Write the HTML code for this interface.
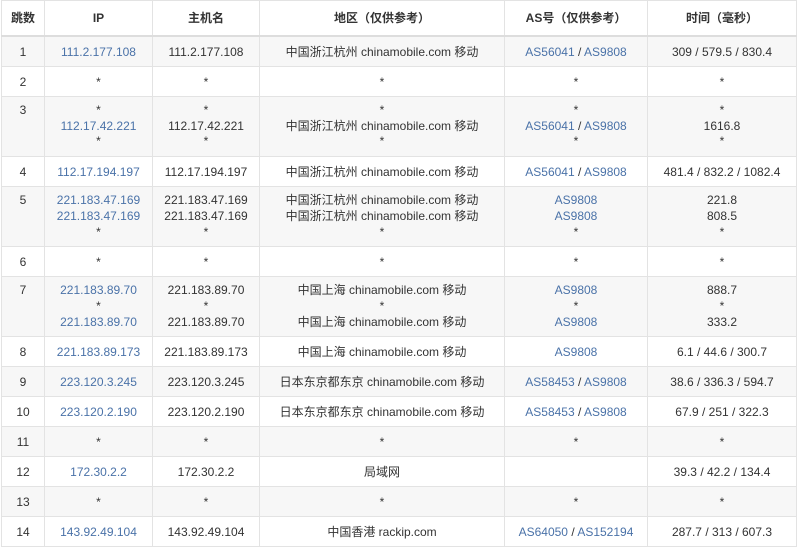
<!DOCTYPE html>
<html><head><meta charset="utf-8"><style>
body{margin:0;background:#fff;font-family:"Liberation Sans","Noto Sans CJK SC",sans-serif;font-size:12px;color:#333;}
table{position:absolute;left:1px;top:0px;width:795px;border-collapse:collapse;table-layout:fixed;}
td,th{border:1px solid #e3e3e3;text-align:center;vertical-align:top;line-height:16px;padding:7px 2px 6px;}
th{font-weight:bold;height:20px;padding:9px 2px 5px;border-bottom:2px solid #ddd;color:#333;}
tr:nth-child(even) td{background:#f7f7f7;}
a{color:#4a72a8;text-decoration:none;}
tr.t td{height:47px;padding-top:6px;padding-bottom:6px;line-height:15.7px;}
</style></head><body>
<table>
<colgroup><col style="width:43px"><col style="width:108px"><col style="width:107px"><col style="width:245px"><col style="width:143px"><col style="width:149px"></colgroup>
<tr><th>跳数</th><th>IP</th><th>主机名</th><th>地区（仅供参考）</th><th>AS号（仅供参考）</th><th>时间（毫秒）</th></tr>
<tr><td>1</td><td><a>111.2.177.108</a></td><td>111.2.177.108</td><td>中国浙江杭州 chinamobile.com 移动</td><td><a>AS56041</a> / <a>AS9808</a></td><td>309 / 579.5 / 830.4</td></tr>
<tr><td>2</td><td>*</td><td>*</td><td>*</td><td>*</td><td>*</td></tr>
<tr class="t"><td>3</td><td>*<br><a>112.17.42.221</a><br>*</td><td>*<br>112.17.42.221<br>*</td><td>*<br>中国浙江杭州 chinamobile.com 移动<br>*</td><td>*<br><a>AS56041</a> / <a>AS9808</a><br>*</td><td>*<br>1616.8<br>*</td></tr>
<tr><td>4</td><td><a>112.17.194.197</a></td><td>112.17.194.197</td><td>中国浙江杭州 chinamobile.com 移动</td><td><a>AS56041</a> / <a>AS9808</a></td><td>481.4 / 832.2 / 1082.4</td></tr>
<tr class="t"><td>5</td><td><a>221.183.47.169</a><br><a>221.183.47.169</a><br>*</td><td>221.183.47.169<br>221.183.47.169<br>*</td><td>中国浙江杭州 chinamobile.com 移动<br>中国浙江杭州 chinamobile.com 移动<br>*</td><td><a>AS9808</a><br><a>AS9808</a><br>*</td><td>221.8<br>808.5<br>*</td></tr>
<tr><td>6</td><td>*</td><td>*</td><td>*</td><td>*</td><td>*</td></tr>
<tr class="t"><td>7</td><td><a>221.183.89.70</a><br>*<br><a>221.183.89.70</a></td><td>221.183.89.70<br>*<br>221.183.89.70</td><td>中国上海 chinamobile.com 移动<br>*<br>中国上海 chinamobile.com 移动</td><td><a>AS9808</a><br>*<br><a>AS9808</a></td><td>888.7<br>*<br>333.2</td></tr>
<tr><td>8</td><td><a>221.183.89.173</a></td><td>221.183.89.173</td><td>中国上海 chinamobile.com 移动</td><td><a>AS9808</a></td><td>6.1 / 44.6 / 300.7</td></tr>
<tr><td>9</td><td><a>223.120.3.245</a></td><td>223.120.3.245</td><td>日本东京都东京 chinamobile.com 移动</td><td><a>AS58453</a> / <a>AS9808</a></td><td>38.6 / 336.3 / 594.7</td></tr>
<tr><td>10</td><td><a>223.120.2.190</a></td><td>223.120.2.190</td><td>日本东京都东京 chinamobile.com 移动</td><td><a>AS58453</a> / <a>AS9808</a></td><td>67.9 / 251 / 322.3</td></tr>
<tr><td>11</td><td>*</td><td>*</td><td>*</td><td>*</td><td>*</td></tr>
<tr><td>12</td><td><a>172.30.2.2</a></td><td>172.30.2.2</td><td>局域网</td><td></td><td>39.3 / 42.2 / 134.4</td></tr>
<tr><td>13</td><td>*</td><td>*</td><td>*</td><td>*</td><td>*</td></tr>
<tr><td>14</td><td><a>143.92.49.104</a></td><td>143.92.49.104</td><td>中国香港 rackip.com</td><td><a>AS64050</a> / <a>AS152194</a></td><td>287.7 / 313 / 607.3</td></tr>
</table>
</body></html>
